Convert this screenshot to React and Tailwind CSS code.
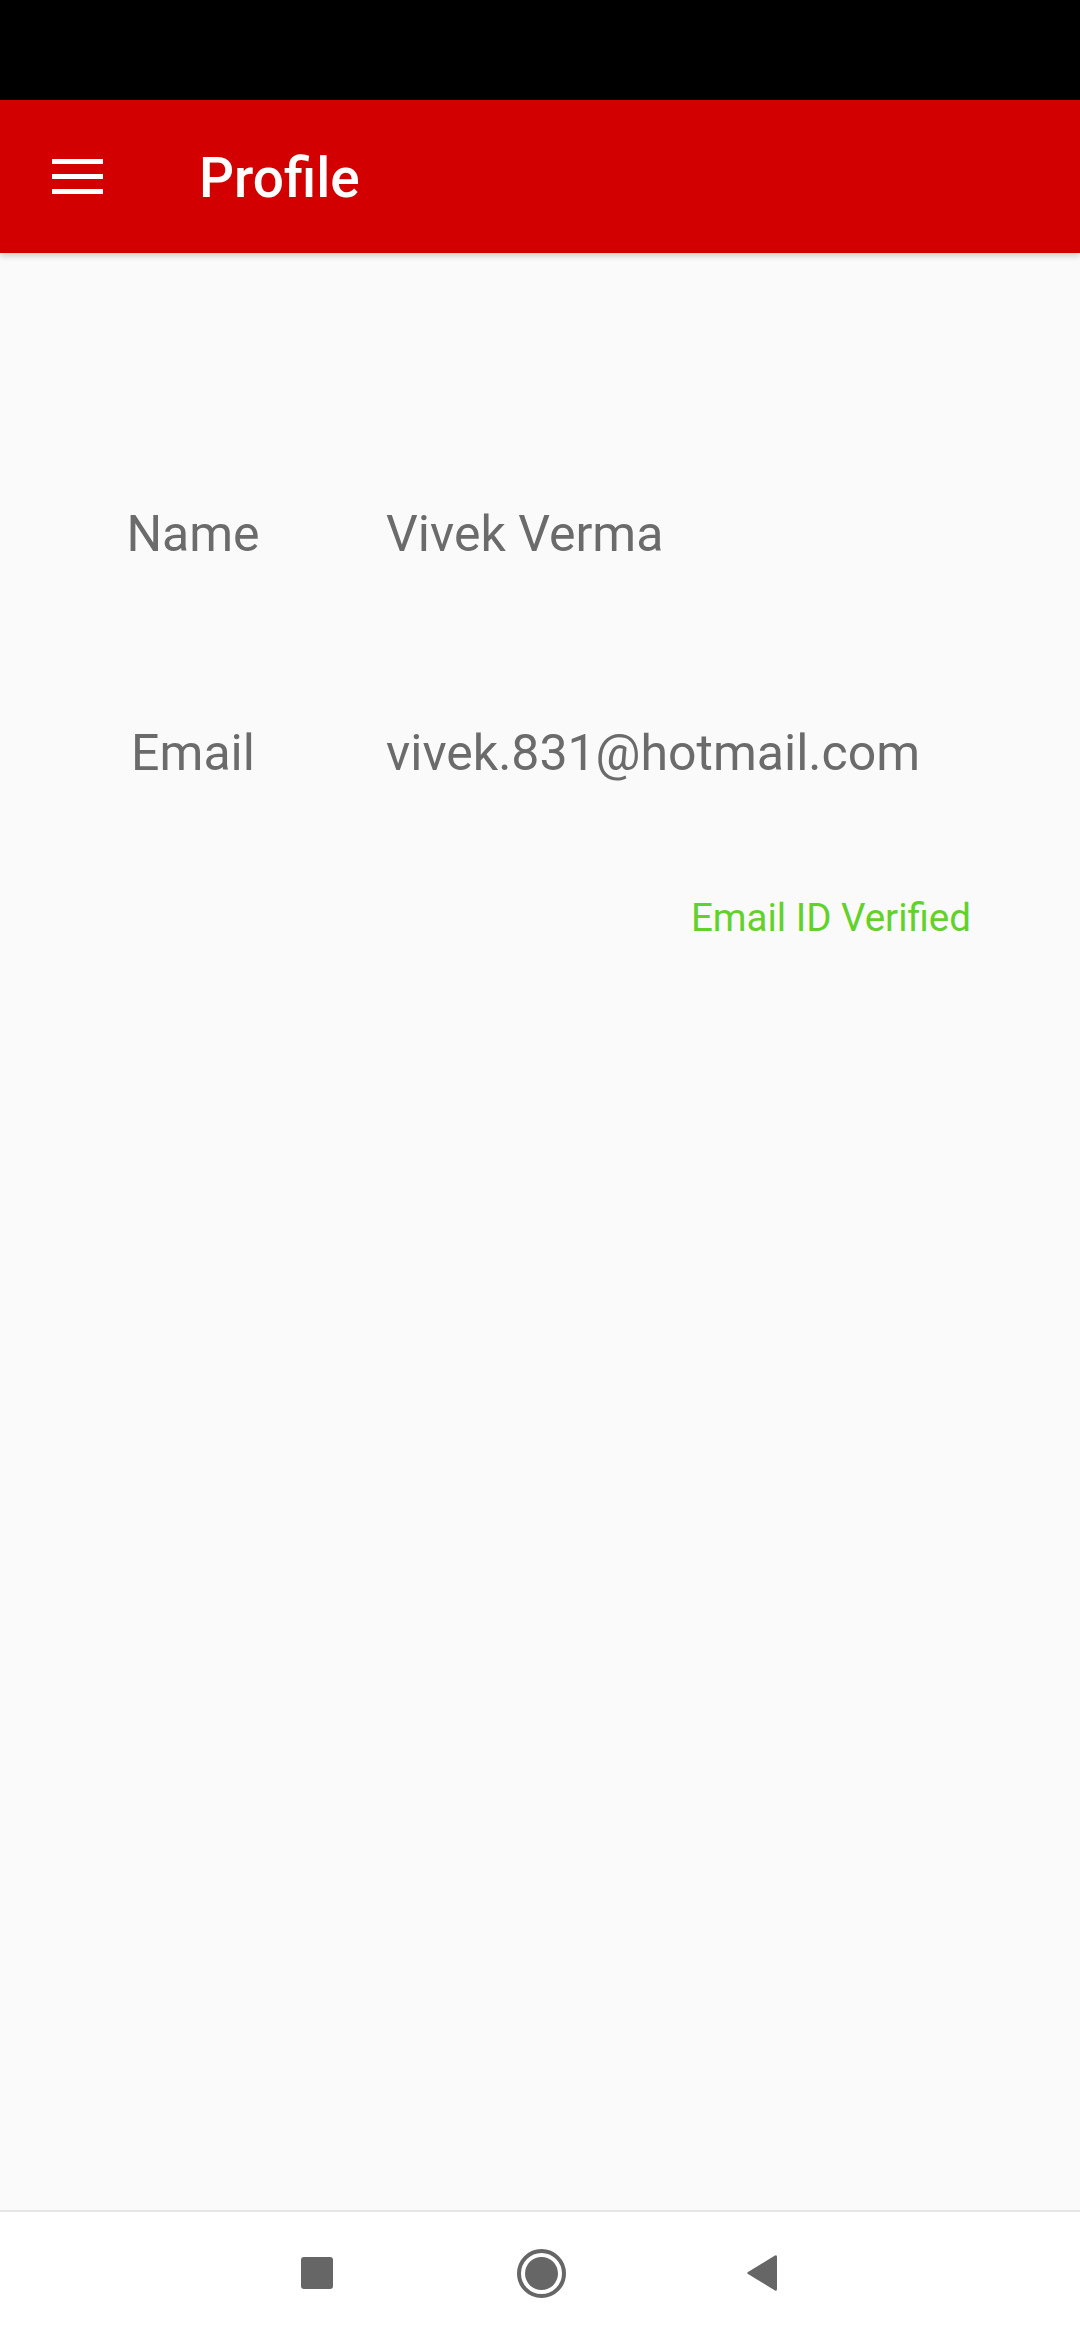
import React from 'react';

const font = { fontFamily: 'Roboto, "Noto Sans", sans-serif' };

const MenuIcon = () => (
  <div className="flex flex-col justify-between w-[51px] h-[35px]">
    <span className="block h-[5px] bg-white" />
    <span className="block h-[5px] bg-white" />
    <span className="block h-[5px] bg-white" />
  </div>
);

const InfoRow = ({ label, value }) => (
  <div className="flex items-start">
    <div className="w-[386px] text-center text-[50px] leading-none text-[#6b6b6b]">{label}</div>
    <div className="text-[50px] leading-none text-[#6b6b6b]">{value}</div>
  </div>
);

export default function App() {
  return (
    <div className="flex flex-col h-[2340px] w-[1080px] bg-[#fafafa]" style={font}>
      {/* status bar */}
      <div className="h-[100px] bg-black shrink-0" />

      {/* app bar */}
      <div className="relative z-10 flex items-center h-[153px] shrink-0 bg-[#d30000] shadow-[0_3px_6px_rgba(0,0,0,0.18)]">
        <div className="pl-[52px] pr-[96px]">
          <MenuIcon />
        </div>
        <h1 className="mt-[4px] text-[55px] font-medium leading-none text-white">Profile</h1>
      </div>

      {/* content */}
      <div className="flex-1 flex flex-col pt-[256px]">
        <InfoRow label="Name" value="Vivek Verma" />
        <div className="mt-[169px]">
          <InfoRow label="Email" value="vivek.831@hotmail.com" />
        </div>
        <div className="mt-[121px] pr-[109px] text-right text-[38.5px] leading-none text-[#62d22b]">
          Email ID Verified
        </div>
      </div>

      {/* nav bar */}
      <div className="h-[130px] shrink-0 bg-white border-t-2 border-[#e6e6e6] flex items-center justify-center">
        <div className="flex items-center -mt-[6px] -ml-[2px]">
          <div className="w-[32px] h-[32px] rounded-[3px] bg-[#666666]" />
          <div className="ml-[184px] w-[49px] h-[49px] rounded-full border-[4px] border-[#666666] flex items-center justify-center">
            <div className="w-[33px] h-[33px] rounded-full bg-[#666666]" />
          </div>
          <svg className="ml-[180px]" width="32" height="38" viewBox="0 0 32 38">
            <path d="M29 1.5 Q31 0.5 31 3 L31 35 Q31 37.5 29 36.5 L2 20 Q0.5 19 2 18 Z" fill="#666666" />
          </svg>
        </div>
      </div>
    </div>
  );
}
